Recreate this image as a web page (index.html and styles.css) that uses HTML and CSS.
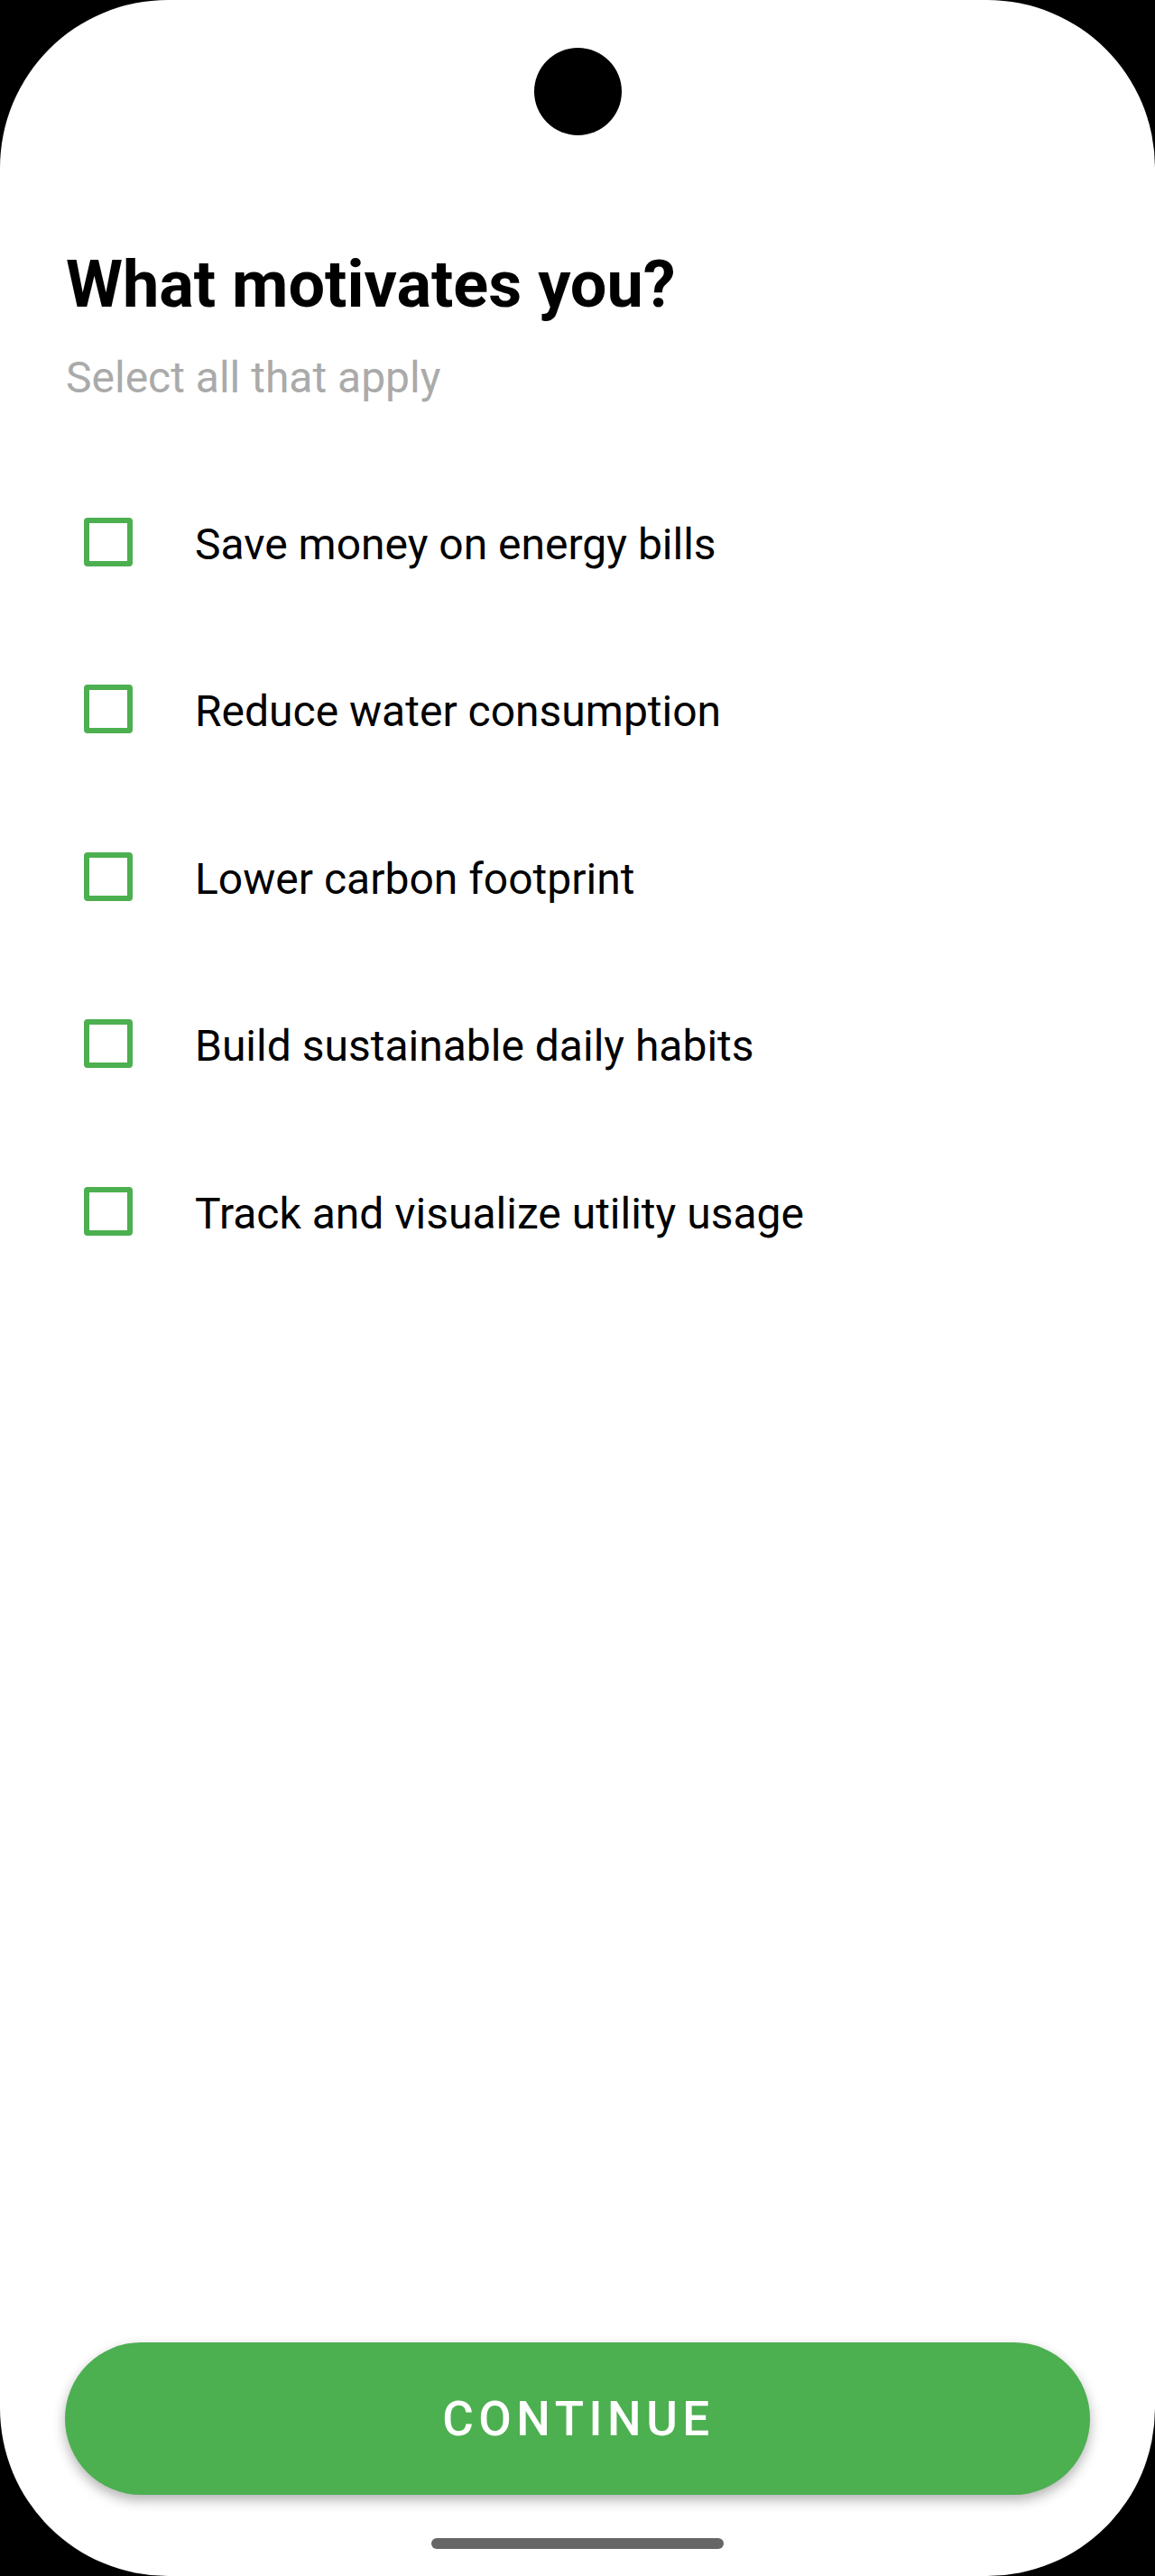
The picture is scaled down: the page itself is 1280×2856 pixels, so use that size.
FILE: index.html
```html
<!DOCTYPE html>
<html lang="en">
<head>
  <meta charset="UTF-8" />
  <meta name="viewport" content="width=device-width, initial-scale=1.0" />
  <title>What motivates you?</title>
  <link rel="stylesheet" href="styles.css">
</head>
<body>
  <div class="screen">
    <div class="camera"></div>

    <div class="content">
      <h1 class="title">What motivates you?</h1>
      <p class="subtitle">Select all that apply</p>

      <div class="options">
        <label class="option"><span class="box"></span><span class="label">Save money on energy bills</span></label>
        <label class="option"><span class="box"></span><span class="label">Reduce water consumption</span></label>
        <label class="option"><span class="box"></span><span class="label">Lower carbon footprint</span></label>
        <label class="option"><span class="box"></span><span class="label">Build sustainable daily habits</span></label>
        <label class="option"><span class="box"></span><span class="label">Track and visualize utility usage</span></label>
      </div>
    </div>

    <button class="continue">CONTINUE</button>
    <div class="home-bar"></div>
  </div>
</body>
</html>
```

FILE: styles.css
```css
body { margin: 0; background: #000; font-family: Roboto, "Liberation Sans", sans-serif; }
.screen { position: relative; height: 2856px; background: #fff; border-radius: 186px; display: flex; flex-direction: column; overflow: hidden; }
.camera { position: absolute; top: 53px; left: 592px; width: 97px; height: 97px; border-radius: 50%; background: #000; }

.content { padding: 274px 73px 0; flex: 1; }
.title { margin: 0; font-size: 72px; line-height: 84px; font-weight: 700; color: #000; }
.subtitle { margin: 33px 0 0; font-size: 48px; line-height: 56px; color: #aaa; }

.options { margin-top: 61px; display: flex; flex-direction: column; }
.option { height: 185.5px; display: flex; align-items: center; }
.box { width: 54px; height: 54px; box-sizing: border-box; border: 6px solid #4caf50; border-radius: 4px; margin-left: 20px; flex-shrink: 0; }
.label { margin-left: 69px; padding-top: 6px; font-size: 48px; line-height: 56px; color: #000; }

.continue { margin: 0 72px; height: 169px; border: none; border-radius: 85px; background: #4caf50; color: #fff; font-family: Roboto, "Liberation Sans", sans-serif; font-size: 53px; font-weight: 500; letter-spacing: 5.5px; padding-left: 8px; box-shadow: 0 6px 14px rgba(0, 0, 0, 0.3); }
.home-bar { margin: 48px auto 30px; width: 324px; height: 12px; border-radius: 6px; background: #666; }
```
